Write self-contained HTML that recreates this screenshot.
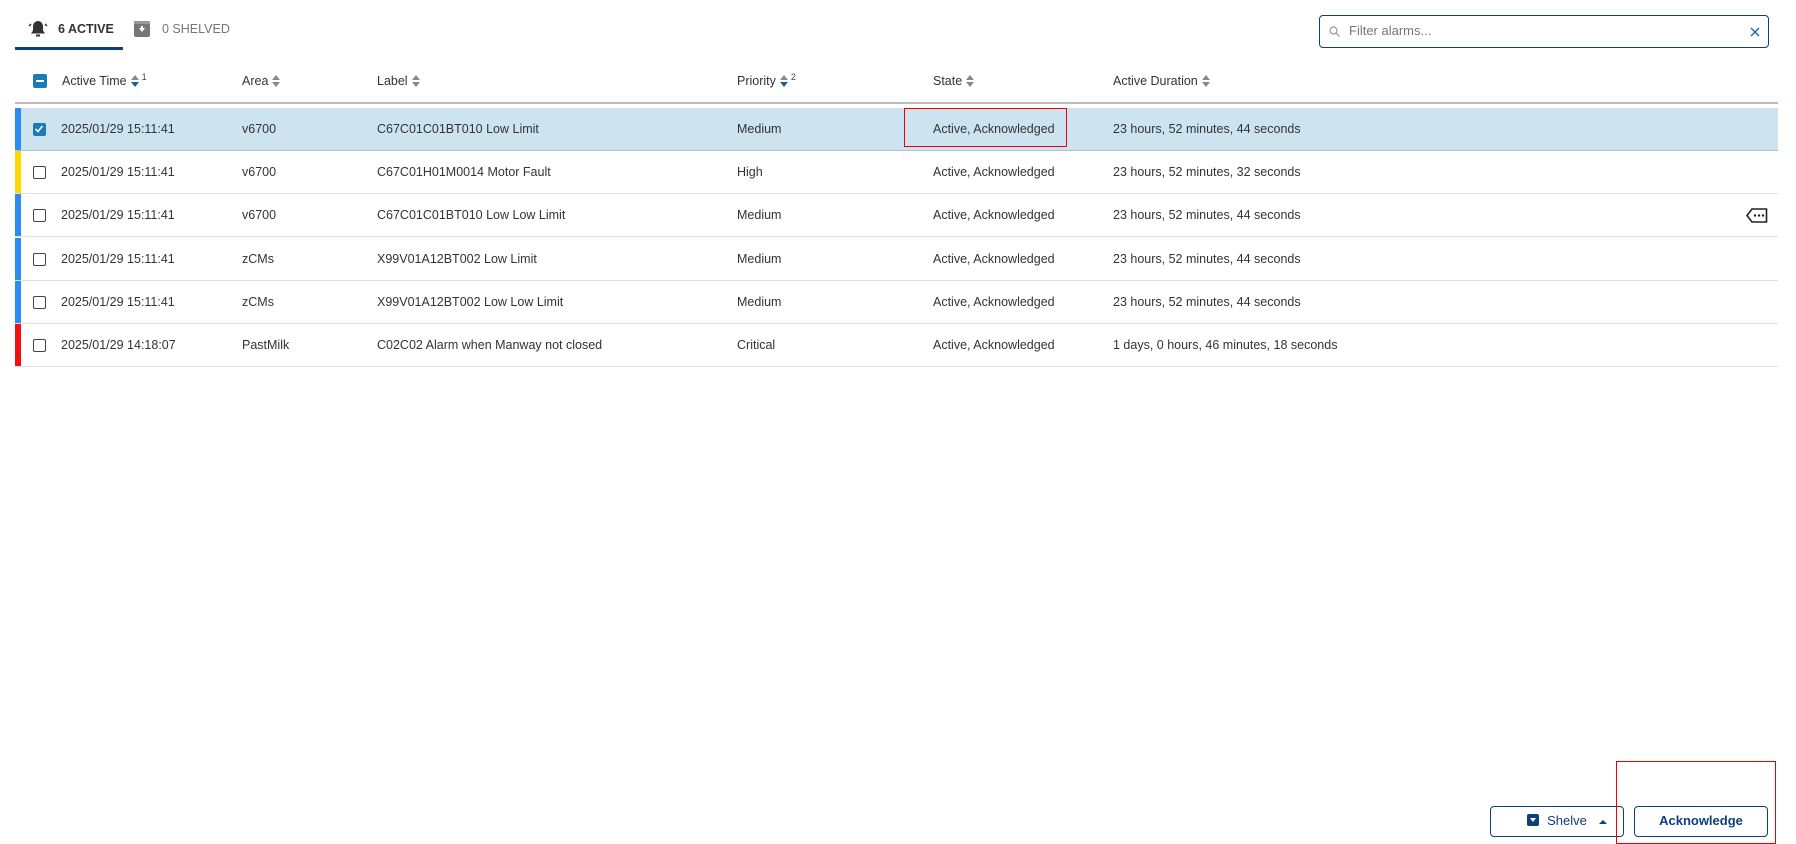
<!DOCTYPE html>
<html><head><meta charset="utf-8"><style>
*{box-sizing:border-box;margin:0;padding:0}
body{width:1796px;height:844px;background:#fff;font-family:"Liberation Sans",sans-serif;color:#333;position:relative;overflow:hidden;font-size:12.5px}
.abs{position:absolute}
.tab{top:20px;height:18px;line-height:18px;font-size:12.5px}
.hdr{top:72px;height:18px;line-height:18px;font-size:12.5px;color:#333;white-space:nowrap}
.row{position:absolute;left:15px;width:1763px;height:43px;border-bottom:1px solid #e0e0e0}
.row span{position:absolute;top:0;line-height:43px;white-space:nowrap}
.bar{position:absolute;left:0;top:0;width:6px;height:100%}
.cb{position:absolute;left:18px;top:15px;width:13px;height:13px;border:1.5px solid #444;border-radius:2px}
.sort{display:inline-block;vertical-align:middle;margin-left:4px;width:8px;height:14px;position:relative;top:-1px}
.sort:before{content:"";position:absolute;top:1px;left:0;border:4px solid transparent;border-bottom:5px solid #888;border-top:0}
.sort:after{content:"";position:absolute;bottom:1px;left:0;border:4px solid transparent;border-top:5px solid #888;border-bottom:0}
.sort.d:after{border-top-color:#1b5f99}
.sup{position:relative;top:-5px;font-size:9px;color:#444;margin-left:3px}
.btn{position:absolute;top:806px;height:31px;border:1.5px solid #0d3f7a;border-radius:4px;color:#0d3f7a;font-size:13px;line-height:28px;text-align:center}
</style></head><body>
<svg class="abs" style="left:28px;top:20px" width="20" height="18" viewBox="0 0 20 18"><path d="M10 1c-3 0-5 2.5-5 5.5v4l-2 3h14l-2-3v-4C15 3.5 13 1 10 1z" fill="#333"/><rect x="8" y="14.5" width="4" height="2" fill="#333"/><path d="M3 4l-2 2M17 4l2 2" stroke="#333" stroke-width="1.5"/></svg>
<div class="abs tab" style="left:58px;font-weight:bold;color:#333">6 ACTIVE</div>
<div class="abs" style="left:15px;top:47px;width:108px;height:3px;background:#0d3f7a"></div>
<div class="abs" style="left:134px;top:21px;width:16px;height:16px;background:#777;border-radius:2px"></div>
<svg class="abs" style="left:134px;top:21px" width="16" height="16"><rect x="0" y="0" width="16" height="3" fill="#999"/><path d="M5 7h6l-3 4z" fill="#fff"/><rect x="7" y="5" width="2" height="3" fill="#fff"/></svg>
<div class="abs tab" style="left:162px;color:#777">0 SHELVED</div>
<div class="abs" style="left:1319px;top:15px;width:450px;height:33px;border:1.5px solid #0d3f7a;border-radius:4px"></div>
<svg class="abs" style="left:1329px;top:26px" width="11" height="11"><circle cx="4.5" cy="4.5" r="3.5" fill="none" stroke="#999" stroke-width="1.2"/><path d="M7 7l3.5 3.5" stroke="#999" stroke-width="1.2"/></svg>
<div class="abs" style="left:1349px;top:22px;line-height:18px;font-size:13px;color:#777">Filter alarms...</div>
<svg class="abs" style="left:1750px;top:27px" width="10" height="10"><path d="M1 1l8 8M9 1l-8 8" stroke="#1b6fb5" stroke-width="1.5"/></svg>
<div class="abs" style="left:33px;top:74px;width:14px;height:14px;background:#1b7ab8;border-radius:2px"><div style="position:absolute;left:3px;top:6px;width:8px;height:2px;background:#fff"></div></div>
<div class="abs hdr" style="left:62px">Active Time<span class="sort d"></span><span class="sup">1</span></div>
<div class="abs hdr" style="left:242px">Area<span class="sort"></span></div>
<div class="abs hdr" style="left:377px">Label<span class="sort"></span></div>
<div class="abs hdr" style="left:737px">Priority<span class="sort d"></span><span class="sup">2</span></div>
<div class="abs hdr" style="left:933px">State<span class="sort"></span></div>
<div class="abs hdr" style="left:1113px">Active Duration<span class="sort"></span></div>
<div class="abs" style="left:15px;top:102px;width:1763px;height:2px;background:#bbb"></div>
<div class="row" style="top:108px;background:#cde3f0;border-bottom-color:#a8c4d8"><div class="bar" style="background:#2b8bf0"></div><div class="cb" style="background:#1b7ab8;border-color:#1b7ab8"><svg width="10" height="10" style="position:absolute;left:0;top:0"><path d="M1.5 5l2.5 2.5L8.5 2" stroke="#fff" stroke-width="1.6" fill="none"/></svg></div><span style="left:46px">2025/01/29 15:11:41</span><span style="left:227px">v6700</span><span style="left:362px">C67C01C01BT010 Low Limit</span><span style="left:722px">Medium</span><span style="left:918px">Active, Acknowledged</span><span style="left:1098px">23 hours, 52 minutes, 44 seconds</span></div>
<div class="row" style="top:151px"><div class="bar" style="background:#ffd600"></div><div class="cb"></div><span style="left:46px">2025/01/29 15:11:41</span><span style="left:227px">v6700</span><span style="left:362px">C67C01H01M0014 Motor Fault</span><span style="left:722px">High</span><span style="left:918px">Active, Acknowledged</span><span style="left:1098px">23 hours, 52 minutes, 32 seconds</span></div>
<div class="row" style="top:194px"><div class="bar" style="background:#2b8bf0"></div><div class="cb"></div><span style="left:46px">2025/01/29 15:11:41</span><span style="left:227px">v6700</span><span style="left:362px">C67C01C01BT010 Low Low Limit</span><span style="left:722px">Medium</span><span style="left:918px">Active, Acknowledged</span><span style="left:1098px">23 hours, 52 minutes, 44 seconds</span>
<svg style="position:absolute;left:1731px;top:14px" width="22" height="15"><path d="M6 1h14.5v13H6L1 7.5z" fill="none" stroke="#222" stroke-width="1.6"/><circle cx="9" cy="7.5" r="1.2" fill="#222"/><circle cx="13" cy="7.5" r="1.2" fill="#222"/><circle cx="17" cy="7.5" r="1.2" fill="#222"/></svg></div>
<div class="row" style="top:238px"><div class="bar" style="background:#2b8bf0"></div><div class="cb"></div><span style="left:46px">2025/01/29 15:11:41</span><span style="left:227px">zCMs</span><span style="left:362px">X99V01A12BT002 Low Limit</span><span style="left:722px">Medium</span><span style="left:918px">Active, Acknowledged</span><span style="left:1098px">23 hours, 52 minutes, 44 seconds</span></div>
<div class="row" style="top:281px"><div class="bar" style="background:#2b8bf0"></div><div class="cb"></div><span style="left:46px">2025/01/29 15:11:41</span><span style="left:227px">zCMs</span><span style="left:362px">X99V01A12BT002 Low Low Limit</span><span style="left:722px">Medium</span><span style="left:918px">Active, Acknowledged</span><span style="left:1098px">23 hours, 52 minutes, 44 seconds</span></div>
<div class="row" style="top:324px"><div class="bar" style="background:#f01010"></div><div class="cb"></div><span style="left:46px">2025/01/29 14:18:07</span><span style="left:227px">PastMilk</span><span style="left:362px">C02C02 Alarm when Manway not closed</span><span style="left:722px">Critical</span><span style="left:918px">Active, Acknowledged</span><span style="left:1098px">1 days, 0 hours, 46 minutes, 18 seconds</span></div>
<div class="abs" style="left:904px;top:108px;width:163px;height:39px;border:1.5px solid #e00"></div>
<div class="btn" style="left:1490px;width:134px"><span style="display:inline-block;width:12px;height:12px;background:#0d3f7a;border-radius:2px;vertical-align:-1px;margin-right:8px;position:relative"><span style="position:absolute;left:3px;top:4px;border:3px solid transparent;border-top:4px solid #fff"></span></span>Shelve<span style="position:absolute;right:16px;top:13px;border:4px solid transparent;border-bottom:4px solid #0d3f7a;border-top:0"></span></div>
<div class="btn" style="left:1634px;width:134px;font-weight:bold">Acknowledge</div>
<div class="abs" style="left:1616px;top:761px;width:160px;height:83px;border:1.5px solid #e00"></div>
</body></html>
